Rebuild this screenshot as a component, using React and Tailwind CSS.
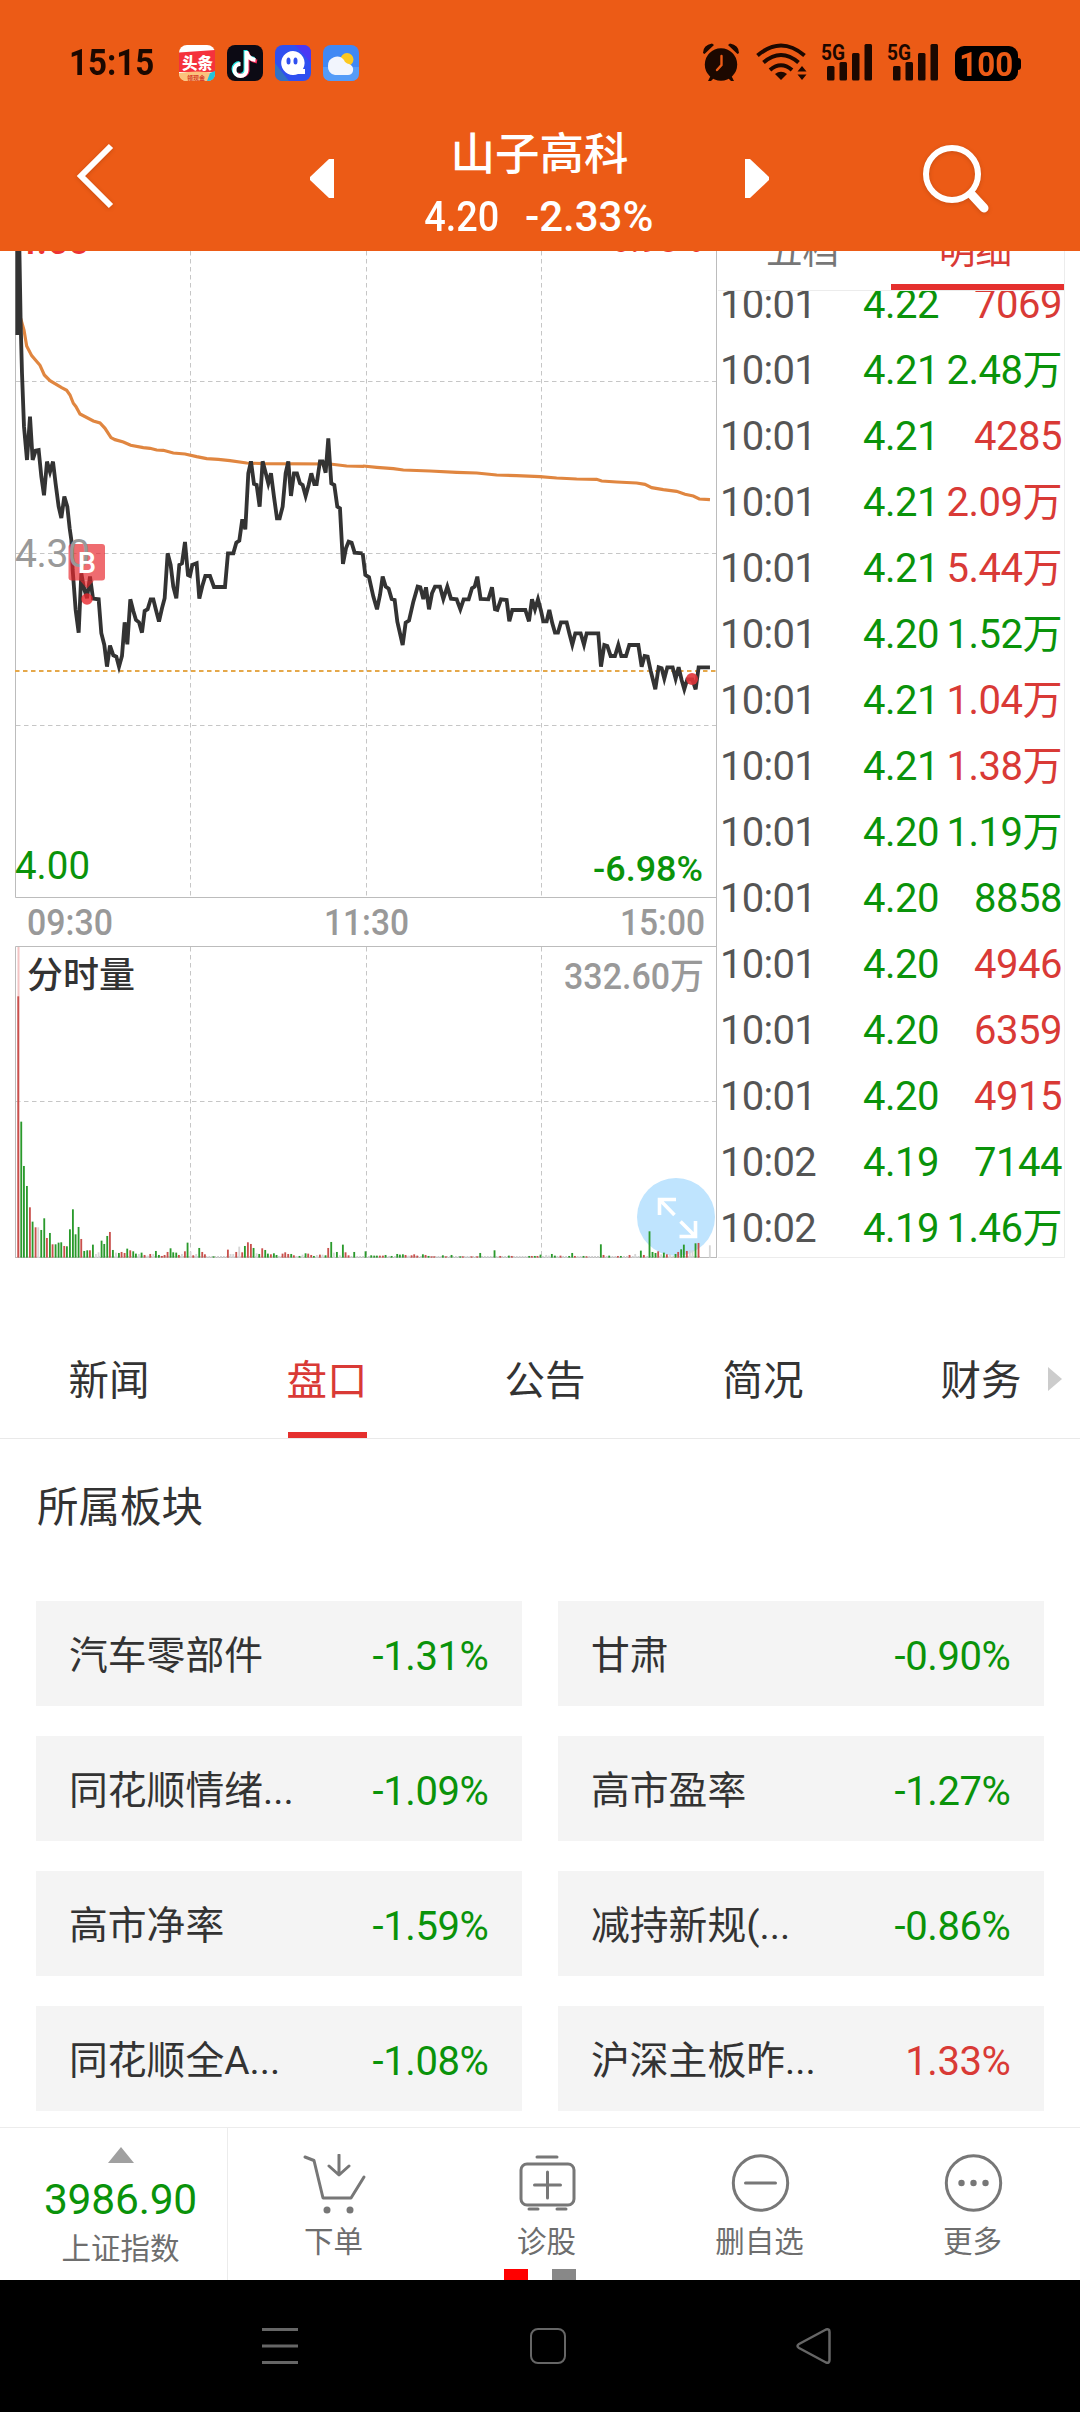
import React from 'react';

const trades = [
  ["10:01", "4.22", "7069", "up"],
  ["10:01", "4.21", "2.48万", "down"],
  ["10:01", "4.21", "4285", "up"],
  ["10:01", "4.21", "2.09万", "up"],
  ["10:01", "4.21", "5.44万", "up"],
  ["10:01", "4.20", "1.52万", "down"],
  ["10:01", "4.21", "1.04万", "up"],
  ["10:01", "4.21", "1.38万", "up"],
  ["10:01", "4.20", "1.19万", "down"],
  ["10:01", "4.20", "8858", "down"],
  ["10:01", "4.20", "4946", "up"],
  ["10:01", "4.20", "6359", "up"],
  ["10:01", "4.20", "4915", "up"],
  ["10:02", "4.19", "7144", "down"],
  ["10:02", "4.19", "1.46万", "down"],
];

const sectors = [
  ["汽车零部件", "-1.31%"],
  ["甘肃", "-0.90%"],
  ["同花顺情绪...", "-1.09%"],
  ["高市盈率", "-1.27%"],
  ["高市净率", "-1.59%"],
  ["减持新规(...", "-0.86%"],
  ["同花顺全A...", "-1.08%"],
  ["沪深主板昨...", "1.33%"],
];

const tabs = ["新闻", "盘口", "公告", "简况", "财务"];

// Chart series are kept at 3x resolution
const priceMorning =
  "52,285 52,20 58,20 62,250 66,400 72,560 81,660 90,530 98,660 107,632 116,630 124,710 132,766 141,665 150,696 159,665 167,732 176,800 184,834 193,770 202,800 209,865 214,900 218,990 227,1110 236,1178 244,1000 252,1045 261,1075 270,1010 279,1076 296,1078 304,1180 313,1215 321,1280 330,1217 340,1246 349,1250 357,1280 366,1248 374,1147 382,1213 391,1078 400,1113 408,1140 417,1147 426,1178 434,1113 443,1108 452,1078 460,1078 468,1110 477,1145 486,1105 494,1075 503,940 512,975 520,1040 529,1075 538,975 546,970 555,906 564,1005 570,1008 577,975 590,970 598,1076 607,1038 616,1008 630,1008 642,1041 675,1041 684,940 700,940 709,908 718,902 727,838 736,868 745,700 753,664 762,732 770,735 779,800 788,664 797,698 805,730 813,700 822,770 831,835 839,835 848,800 857,700 865,664 873,768 882,700 891,700 900,730 908,735 917,768 926,735 934,700 943,732 950,732 960,664 968,664 977,698 985,595 994,730 1003,735 1012,800 1020,805 1029,972 1038,925 1046,905 1055,908 1064,938 1088,940";

const priceAfternoon =
  "38,460 46,525 57,532 70,590 81,628 90,585 98,530 107,560 116,566 125,597 134,600 142,665 158,735 167,668 177,662 190,605 203,560 211,562 220,597 228,562 237,628 246,580 255,560 270,560 280,597 292,560 303,596 320,598 331,628 341,598 356,598 366,565 374,560 382,530 392,597 415,598 426,562 435,628 442,630 453,598 470,600 478,664 487,630 526,630 537,664 546,598 555,628 564,598 573,632 580,664 590,664 598,630 607,670 615,698 624,698 633,667 650,667 658,700 667,734 676,700 692,700 702,734 710,700 745,700 753,800 763,735 772,738 782,768 795,768 805,735 814,768 828,768 838,735 865,735 875,800 884,768 893,770 902,812 916,868 926,802 935,805 943,836 952,802 968,802 977,836 986,802 995,840 1003,868 1012,838 1027,838 1037,868 1046,802 1080,802";

const averageMorning =
  "62,235 72,270 80,318 95,347 120,376 133,405 150,422 185,443 200,451 210,465 220,490 228,500 240,522 280,543 300,549 315,565 333,593 345,599 370,606 392,616 430,623 450,625 470,630 490,631 520,639 555,642 590,650 620,656 655,658 690,662 740,669 790,671 990,672 1040,678 1092,679";

const averageAfternoon =
  "40,198 80,202 130,206 160,210 240,213 320,217 380,219 440,225 500,227 570,230 620,234 680,237 740,238 755,243 800,246 860,249 885,253 905,263 940,269 980,274 1005,283 1030,288 1048,297 1080,299";

const volumes =
  "r55:784 g64:408 g72:275 g81:215 r90:151 g98:108 r107:91 n115:91 g124:83 g133:118 r141:59 g150:74 r158:40 g167:40 g176:45 g184:46 r193:35 g201:34 g210:85 g219:145 g227:70 g236:92 r244:56 g253:20 g262:22 r270:22 g279:39 n288:11 n296:16 g305:51 g313:41 g322:65 r330:77 g339:23 n348:15 g357:14 r365:17 r374:14 g382:27 r391:22 g400:19 g408:12 n417:11 g425:15 r434:8 n443:6 r451:11 n460:11 g468:20 g477:8 r486:5 r494:8 r503:17 g512:28 g520:16 g529:15 r537:8 n546:11 r555:19 g563:45 n572:18 r580:7 n589:11 g598:29 r607:17 r615:10 g641:4 r684:24 n692:11 n700:11 r709:17 n718:33 r727:16 g735:35 r744:46 r753:41 g761:29 n770:13 g778:11 r787:28 g796:23 g804:12 r813:10 g822:13 g830:8 n839:5 r848:12 r856:16 r865:11 g874:11 r882:7 n891:4 g899:5 n908:9 g917:13 r925:12 r934:8 g942:5 n951:8 r960:9 n968:9 g977:7 r985:29 g994:47 n1002:15 g1011:17 n1020:7 g1029:39 r1037:16 r1046:7 g1063:17 " +
  "g1097:19 g1114:7 g1123:6 g1131:6 r1140:6 r1149:6 g1157:8 g1175:5 g1192:11 g1200:9 g1209:10 r1217:8 n1226:6 r1235:7 r1243:10 r1252:6 g1269:10 r1277:8 g1286:5 r1295:4 r1303:4 g1329:7 r1338:4 g1355:8 g1381:4 r1389:4 r1415:4 r1432:4 g1441:14 g1484:22 r1501:5 g1527:6 r1536:5 g1588:5 r1596:5 g1605:5 r1613:5 g1622:9 n1639:8 n1647:6 g1656:11 g1665:6 r1682:6 g1708:5 g1717:14 r1725:5 g1751:5 r1760:4 g1803:40 r1811:8 g1828:6 r1854:5 g1863:5 r1889:8 n1906:11 g1923:21 r1932:8 g1949:79 g1958:17 g1967:14 r1975:19 n1984:10 g1992:15 r2001:10 n2010:10 g2027:11 r2035:17 g2044:25 g2052:39 r2061:20 n2070:22 n2078:22 g2087:43 r2096:44 n2130:37";

const volumeBars = volumes.split(" ").map((item) => {
  const [x, height] = item.slice(1).split(":").map(Number);
  return { tone: item[0], x, height };
});

const barFill = { r: "#c9504c", g: "#2a9a2c", n: "#d6d6d6" };

const Signal = () => (
  <svg className="overflow-visible" width="52" height="38" viewBox="0 0 52 38" fill="#1c0800">
    <text x="0" y="16.500" fontSize="22" fontWeight="700" textLength="24" lengthAdjust="spacingAndGlyphs">5G</text>
    <rect x="6" y="23" width="7.5" height="14.500" rx="1.500" />
    <rect x="18.500" y="19" width="7.5" height="18.500" rx="1.500" />
    <rect x="31" y="10" width="7.500" height="27.500" rx="1.500" />
    <rect x="43.500" y="1" width="7.500" height="36.500" rx="1.500" />
  </svg>
);

const StatusBar = () => (
  <div className="flex h-[81px] items-end pl-[69px] pr-[59px]">
    <div className="flex h-9 w-[110px] items-center">
      <span className="origin-left scale-x-[0.92] text-[36px] font-bold leading-none text-[#1c0800]">15:15</span>
    </div>
    <div className="flex gap-3">
      <svg width="36" height="36" viewBox="0 0 36 36">
        <rect width="36" height="36" rx="8" fill="#fff" />
        <path d="M0 7.500 36 5v22H0z" fill="#f5323c" />
        <path d="M0 28q18-3 36 0v1q-1 7-8 7H8q-8 0-8-8z" fill="#fbc27c" />
        <path d="M31 28l5-2v4q-1 6-8 6z" fill="#22c3dc" />
        <text x="3" y="23.500" fontSize="15.500" fontWeight="900" fill="#fff">头条</text>
        <text x="8" y="34.500" fontSize="6" fontWeight="700" fill="#d63c28">领现金</text>
      </svg>
      <svg width="36" height="36" viewBox="0 0 36 36">
        <rect width="36" height="36" rx="8" fill="#0c0a14" />
        <g fill="none" strokeWidth="4">
          <path d="M18.500 5v19a6 6 0 1 1-6-6M18.500 6q1.500 7 9 8" stroke="#22e6e4" />
          <path d="M20.500 7v19a6 6 0 0 1-10 3M20.500 8q1.500 7 9.500 8.500" stroke="#f8285a" />
          <path d="M19.500 6v19a6 6 0 1 1-6-6M19.500 7q1.500 7 9 8" stroke="#fff" />
        </g>
      </svg>
      <svg width="36" height="36" viewBox="0 0 36 36">
        <rect width="36" height="36" rx="8" fill="#2f50f0" />
        <path d="M20 0h8q8 0 8 8v10z" fill="#4a38f4" />
        <path d="M0 18l14 18H8q-8 0-8-8z" fill="#3272c4" />
        <path d="M18 6a12 12 0 1 0 5 23h7v-5h-2A12 12 0 0 0 18 6z" fill="#fff" />
        <ellipse cx="13.500" cy="16" rx="2" ry="3.600" fill="#2f50f0" />
        <ellipse cx="20.500" cy="16" rx="2" ry="3.600" fill="#2f50f0" />
      </svg>
      <svg width="36" height="36" viewBox="0 0 36 36">
        <rect width="36" height="36" rx="8" fill="#4088f4" />
        <path d="M0 22h36v6q0 8-8 8H8q-8 0-8-8z" fill="#559cf8" />
        <circle cx="24" cy="14.500" r="6.500" fill="#fcc820" />
        <path d="M12 30a8 8 0 0 1-7-9 9 9 0 0 1 16-6q1 3 5 4 5 2 4 7-1 4-5 4z" fill="#f2f5fd" />
      </svg>
    </div>
    <div className="ml-auto flex items-end">
      <svg width="38" height="38" viewBox="0 0 38 38" fill="#1c0800">
        <circle cx="19" cy="21.500" r="16.200" />
        <path d="M1 10Q1 2 10 .5L12 2 2.500 11zM37 10Q37 2 28 .5L26 2l9.500 9zM9 32l-3 6h3l4-4zM29 32l3 6h-3l-4-4z" />
        <path d="M19.500 13v9l-4.500 5" fill="none" stroke="#ec5b16" strokeWidth="2.400" strokeLinecap="round" />
      </svg>
      <svg className="ml-4" width="51" height="38" viewBox="0 0 51 38" fill="none" stroke="#1c0800" strokeWidth="4">
        <path d="M1.500 12.500q23.500-20 47 0M7.500 19.500q17.500-15 35 0M14 27q11-9.500 22 0" />
        <path d="M19 31q6-4.500 12 0l-6 6z" fill="#1c0800" stroke="none" />
        <path d="M41.500 28.500l4.500-5.500 4.500 5.500zM41.500 31.500h9L46 37z" fill="#1c0800" stroke="none" />
      </svg>
      <div className="ml-[14px]"><Signal /></div>
      <div className="ml-[14px]"><Signal /></div>
      <div className="ml-4 flex h-[35px] w-[63px] items-center justify-center rounded-[9px] bg-black">
        <span className="scale-x-[0.92] text-[34px] font-bold leading-none text-[#ec5b16]">100</span>
      </div>
      <div className="mb-[11px] h-3 w-[3px] rounded-r bg-black"></div>
    </div>
  </div>
);

const Header = () => (
  <div className="h-[251px] shrink-0 bg-[#ec5b16]">
    <StatusBar />
    <div className="flex h-[170px] pl-[76px] text-white">
      <svg className="mt-[61px] drop-shadow-sm" width="38" height="68" viewBox="0 0 38 68" fill="none" stroke="#fff" strokeWidth="6">
        <path d="M35 4 5 34l30 30" />
      </svg>
      <svg className="ml-[196px] mt-[78px]" width="24" height="39" viewBox="0 0 24 39" fill="#fff">
        <path d="M24 0v39h-5L0 21v-3L19 0z" />
      </svg>
      <div className="w-[411px] pt-[43px] text-center">
        <h1 className="text-[44.500px] font-medium leading-[62px]">山子高科</h1>
        <div className="mt-2 flex justify-center gap-[26px] pr-[10px] text-[42px] font-medium leading-[46px]">
          <span className="origin-right scale-x-[0.9]">4.20</span>
          <span>-2.33%</span>
        </div>
      </div>
      <svg className="mt-[78px]" width="24" height="39" viewBox="0 0 24 39" fill="#fff">
        <path d="M0 0v39h5l19-18v-3L5 0z" />
      </svg>
      <svg className="ml-[152px] mt-[62px] drop-shadow-sm" width="70" height="72" viewBox="0 0 70 72" fill="none" stroke="#fff">
        <circle cx="31" cy="31" r="26" strokeWidth="6" />
        <path d="M51 52l12 13" strokeWidth="9" strokeLinecap="round" />
      </svg>
    </div>
  </div>
);

const Chart = () => (
  <svg className="shrink-0" width="718" height="1008" viewBox="0 251 718 1008">
    {/* Frames */}
    <g fill="none" stroke="#bcbcbc" strokeWidth="1">
      <path d="M15.500 251V897.500H716.500M15.500 1258V946.500H716.500M15.500 1257.500H716.500" />
      <path d="M716.500 251V1258" />
    </g>
    {/* Grid */}
    <g fill="none" stroke="#c6c6c6" strokeWidth="1" strokeDasharray="4.500 3.500">
      <path d="M190.500 251V897M366.500 251V897M541.500 251V897M190.500 947V1257M366.500 947V1257M541.500 947V1257" />
      <path d="M16 381.500H716M16 553.500H716M16 725.500H716M16 1101.500H716" />
    </g>
    <path d="M15 671H716" stroke="#e5a84a" strokeWidth="1.800" strokeDasharray="4.500 3.500" />

    {/* Average and price lines */}
    <g transform="translate(0 240) scale(0.3333)" fill="none">
      <polyline points={averageMorning} stroke="#e08640" strokeWidth="9.500" />
      <polyline points={priceMorning} stroke="#333" strokeWidth="11.500" />
    </g>
    <g transform="translate(350 400) scale(0.3333)" fill="none">
      <polyline points={averageAfternoon} stroke="#e08640" strokeWidth="9.500" />
      <polyline points={priceAfternoon} stroke="#333" strokeWidth="11.500" />
    </g>
    <circle cx="692" cy="679" r="6" fill="#e03438" fillOpacity="0.9" />

    {/* Buy marker */}
    <g fill="#e8262c">
      <rect x="68.500" y="544" width="36.500" height="36.500" rx="3" fillOpacity="0.68" />
      <path d="M80 580.500h14l-7 8z" fillOpacity="0.68" />
      <circle cx="87" cy="599" r="5.800" fillOpacity="0.8" />
    </g>

    {/* Axis labels */}
    <g fontSize="39">
      <text x="15" y="254" fill="#e33" textLength="75" fontWeight="500">4.60</text>
      <text x="15" y="567" fill="#999" textLength="75">4.30</text>
      <text x="15" y="879" fill="#0a930a" textLength="75" lengthAdjust="spacingAndGlyphs">4.00</text>
    </g>
    <text x="87" y="572.500" fontSize="29" fontWeight="500" fill="#fff" textAnchor="middle">B</text>
    <g fontSize="35" fontWeight="500">
      <text x="611" y="252" fill="#e33" textLength="92" lengthAdjust="spacingAndGlyphs">6.98%</text>
      <text x="593" y="881" fill="#0a930a" textLength="110" lengthAdjust="spacingAndGlyphs">-6.98%</text>
    </g>
    <g fontSize="36" fontWeight="500" fill="#999">
      <text x="27" y="935" textLength="86" lengthAdjust="spacingAndGlyphs">09:30</text>
      <text x="324" y="935" textLength="85" lengthAdjust="spacingAndGlyphs">11:30</text>
      <text x="620" y="935" textLength="85" lengthAdjust="spacingAndGlyphs">15:00</text>
      <text x="564" y="989" textLength="140" lengthAdjust="spacingAndGlyphs">332.60万</text>
    </g>
    <text x="27" y="988" fontSize="36" fontWeight="500" fill="#333">分时量</text>

    {/* Volume */}
    <circle cx="676" cy="1217" r="39" fill="#bfe4fe" />
    <path d="M50 947V1257" transform="translate(-31.500 0)" stroke="#f3c4c4" strokeWidth="2" />
    <path d="M17 1257H700" stroke="#ccc" strokeWidth="2" strokeDasharray="1.900 1" />
    <g transform="translate(0 930) scale(0.3333)">
      {volumeBars.map((bar) => (
        <rect key={bar.x} x={bar.x - 3} y={983 - bar.height} width="5.500" height={bar.height} fill={barFill[bar.tone]} />
      ))}
    </g>
    <path d="M659.500 1215V1199.500H676M659.500 1199.500 674.500 1215M680.500 1221.500 695.500 1236.500M679.500 1236.500H695.500V1221" fill="none" stroke="#fff" strokeWidth="3.600" />
  </svg>
);

const TradeList = () => (
  <div className="flex h-[1007px] w-[347px] flex-col border-b border-r border-[#ececec]">
    <div className="flex h-[39px] shrink-0 items-end overflow-hidden text-[36.500px] leading-none">
      <div className="w-[173px] pb-[20px] pr-1 text-center text-[#777]">五档</div>
      <div className="w-[173px] border-b-[6px] border-[#e5302e] pb-[14px] pr-1 text-center text-[#d93a36]">明细</div>
    </div>
    <div className="flex-1 overflow-hidden border-t border-[#ececec] text-[40px]">
      <div className="-mt-[19px]">
        {trades.map(([time, price, volume, side], index) => (
          <div key={index} className="flex h-[66px] items-center leading-[66px]">
            <span className="w-[145px] pl-[2px] tracking-[-0.7px] text-[#555]">{time}</span>
            <span className="tracking-[-0.5px] text-[#0a930a]">{price}</span>
            <span className={`ml-auto pr-[2px] tracking-[-0.5px] ${side === "up" ? "text-[#d93a36]" : "text-[#0a930a]"}`}>{volume}</span>
          </div>
        ))}
      </div>
    </div>
  </div>
);

const TabBar = () => (
  <div className="mt-[61px] flex h-[120px] shrink-0 items-stretch border-b border-[#e9e9e9] text-[40.500px] text-[#333]">
    {tabs.map((tab) => (
      <div key={tab} className="flex w-[218px] shrink-0 justify-center">
        <div className={`flex w-[79px] items-center justify-center whitespace-nowrap border-b-[6px] pt-[11px] ${tab === "盘口" ? "border-[#e5302e] text-[#d93a36]" : "border-transparent"}`}>{tab}</div>
      </div>
    ))}
    <svg className="-ml-[42px] mt-[48px] shrink-0" width="14" height="24" viewBox="0 0 14 24" fill="#ccc">
      <path d="M0 0l14 12L0 24z" />
    </svg>
  </div>
);

const Sectors = () => (
  <div className="px-9">
    <h2 className="h-[162px] pl-px pt-[37px] text-[41.500px] leading-[64px] text-[#333]">所属板块</h2>
    <div className="grid grid-cols-2 gap-x-9 gap-y-[30px]">
      {sectors.map(([name, change]) => (
        <div key={name} className="flex h-[105px] items-center justify-between bg-[#f4f4f4] pl-[33px] pr-[33.500px] pt-[6px]">
          <span className="text-[38.800px] text-[#333]">{name}</span>
          <span className={`text-[40px] tracking-[-0.4px] ${change.startsWith("-") ? "text-[#0a930a]" : "text-[#d93a36]"}`}>{change}</span>
        </div>
      ))}
    </div>
  </div>
);

const actions = [
  {
    label: "下单",
    icon: (
      <>
        <path d="M2 3l9 3.500L20 44h28l13-21" />
        <path d="M36 1v19M26 12l10 9 10-9" />
        <circle cx="24" cy="56" r="3.500" fill="#777" stroke="none" />
        <circle cx="47" cy="56" r="3.500" fill="#777" stroke="none" />
      </>
    ),
  },
  {
    label: "诊股",
    icon: (
      <>
        <rect x="5" y="10" width="53" height="41" rx="6" />
        <path d="M21 3h20M13 55h9M41 55h9M31.500 18v26M18.500 31h26" />
      </>
    ),
  },
  {
    label: "删自选",
    icon: (
      <>
        <circle cx="31.500" cy="29" r="27.200" />
        <path d="M16.500 29h30" />
      </>
    ),
  },
  {
    label: "更多",
    icon: (
      <>
        <circle cx="31.500" cy="29" r="27.200" />
        <g fill="#777" stroke="none">
          <circle cx="19.500" cy="29" r="3.200" />
          <circle cx="31.500" cy="29" r="3.200" />
          <circle cx="43.500" cy="29" r="3.200" />
        </g>
      </>
    ),
  },
];

const BottomBar = () => (
  <div className="relative mt-auto flex h-[153px] shrink-0 border-t border-[#ececec] bg-white text-[#6e6e6e]">
    <div className="flex w-[228px] flex-col items-center border-r border-[#ececec] pr-[14px]">
      <svg className="ml-[28px] mt-[19px]" width="26" height="16" viewBox="0 0 26 16" fill="#a0a0a0">
        <path d="M13 0l13 16H0z" />
      </svg>
      <div className="ml-[28px] mt-[11px] text-[42.500px] leading-[52px] tracking-[-0.2px] text-[#0a930a]">3986.90</div>
      <div className="ml-[28px] mt-[5px] text-[29.500px] leading-[36px]">上证指数</div>
    </div>
    {actions.map(({ label, icon }) => (
      <div key={label} className="flex w-[213px] flex-col items-center">
        <svg className="mt-[26px]" width="64" height="62" viewBox="0 0 64 62" fill="none" stroke="#777" strokeWidth="3" strokeLinecap="round" strokeLinejoin="round">
          {icon}
        </svg>
        <div className="mt-[8px] pr-[2px] text-[29.500px] leading-[36px]">{label}</div>
      </div>
    ))}
    {/* Page dots */}
    <div className="absolute bottom-0 left-[504px] flex gap-6">
      <div className="h-[11px] w-6 bg-[#ff0000]"></div>
      <div className="h-[11px] w-6 bg-[#888]"></div>
    </div>
  </div>
);

const SystemNav = () => (
  <div className="flex h-[132px] shrink-0 items-center bg-black pl-[262px]">
    <svg width="36" height="38" viewBox="0 0 36 38" stroke="#666" strokeWidth="3">
      <path d="M0 2.500h36M0 19h36M0 35.500h36" />
    </svg>
    <div className="ml-[232px] h-9 w-9 rounded-[8px] border-[2.500px] border-[#666]"></div>
    <svg className="ml-[230px]" width="36" height="38" viewBox="0 0 36 38" fill="none" stroke="#666" strokeWidth="2.500" strokeLinejoin="round">
      <path d="M30 2.500 3 17q-3 2 0 4l27 14.500q3.500 1 3.500-2.500V5q0-3.500-3.500-2.500z" />
    </svg>
  </div>
);

export default function App() {
  return (
    <div className="flex h-[2412px] w-[1080px] flex-col overflow-hidden bg-white font-['Roboto','Noto_Sans_CJK_SC',sans-serif]">
      <Header />
      <div className="flex h-[1007px] shrink-0 overflow-hidden">
        <Chart />
        <TradeList />
      </div>
      <TabBar />
      <Sectors />
      <BottomBar />
      <SystemNav />
    </div>
  );
}
